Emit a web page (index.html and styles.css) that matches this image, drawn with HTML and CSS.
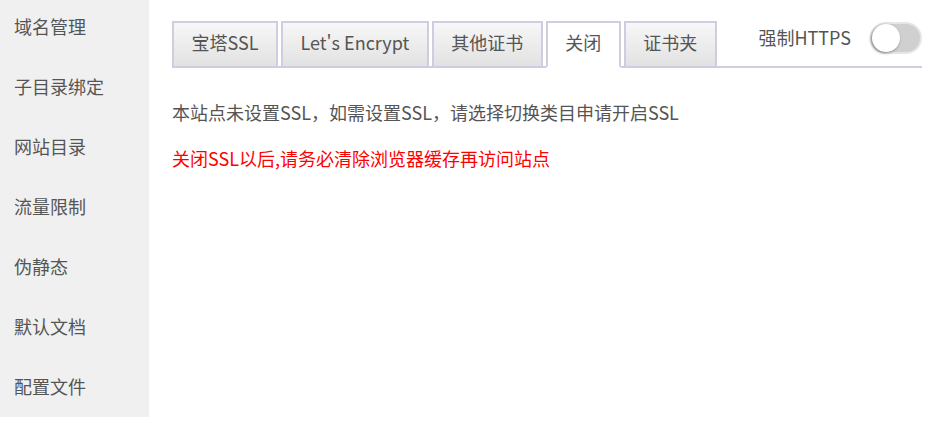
FILE: index.html
```html
<!DOCTYPE html>
<html lang="zh-CN">
<head>
<meta charset="utf-8">
<title>SSL</title>
<link rel="stylesheet" href="styles.css">
</head>
<body>
<div class="page">
  <ul class="side">
    <li class="side-item">域名管理</li>
    <li class="side-item">子目录绑定</li>
    <li class="side-item">网站目录</li>
    <li class="side-item">流量限制</li>
    <li class="side-item">伪静态</li>
    <li class="side-item">默认文档</li>
    <li class="side-item">配置文件</li>
  </ul>
  <div class="main">
    <div class="tabbar">
      <ul class="tabs">
        <li class="tab">宝塔SSL</li>
        <li class="tab">Let's Encrypt</li>
        <li class="tab">其他证书</li>
        <li class="tab active">关闭</li>
        <li class="tab">证书夹</li>
      </ul>
      <div class="force">
        <span class="force-label">强制HTTPS</span>
        <span class="switch"><span class="knob"></span></span>
      </div>
    </div>
    <p class="msg">本站点未设置SSL，如需设置SSL，请选择切换类目申请开启SSL</p>
    <p class="warn">关闭SSL以后,请务必清除浏览器缓存再访问站点</p>
  </div>
</div>
</body>
</html>
```

FILE: styles.css
```css
* { box-sizing: border-box; }
html, body { margin: 0; padding: 0; background: #fff; }
body {
  font-family: "Noto Sans CJK SC", "Microsoft YaHei", sans-serif;
  font-size: 18px;
  color: #555;
}
.page { display: flex; align-items: flex-start; }
.side {
  list-style: none;
  margin: 0;
  padding: 0;
  width: 149px;
  height: 417px;
  overflow: hidden;
  background: #f0f0f0;
  flex: none;
}
.side-item {
  height: 60px;
  line-height: 52px;
  padding-left: 14px;
  color: #555;
  white-space: nowrap;
}
.main {
  flex: 1;
  padding: 21px 20px 0 23px;
}
.tabbar {
  display: flex;
  align-items: flex-end;
  border-bottom: 2px solid #cfcde0;
  height: 47px;
}
.tabs {
  list-style: none;
  margin: 0 0 -2px 0;
  padding: 0;
  display: flex;
  gap: 3px;
}
.tab {
  height: 47px;
  line-height: 39px;
  padding: 0 17.5px;
  border: 2px solid #cfcde0;
  background: linear-gradient(#f7f7f7, #e2e2e2);
  color: #555;
  white-space: nowrap;
}
.tab.active {
  background: #fff;
  border-bottom-color: #fff;
}
.force {
  margin-left: auto;
  align-self: flex-start;
  display: flex;
  align-items: center;
  gap: 19px;
  margin-top: 1px;
}
.force-label { color: #555; line-height: 24px; margin-top: -2px; }
.switch {
  position: relative;
  display: block;
  width: 52px;
  height: 32px;
  border-radius: 16px;
  background: #d0d0d0;
  border: 2px solid #e6e6e6;
}
.knob {
  position: absolute;
  left: 0;
  top: 0;
  width: 28px;
  height: 28px;
  border-radius: 50%;
  background: #fff;
  box-shadow: -1px 1px 3px rgba(0,0,0,0.45);
}
.msg {
  margin: 32px 0 0 0;
  line-height: 24px;
  color: #555;
}
.warn {
  margin: 22px 0 0 0;
  line-height: 24px;
  color: #f00;
}
```
